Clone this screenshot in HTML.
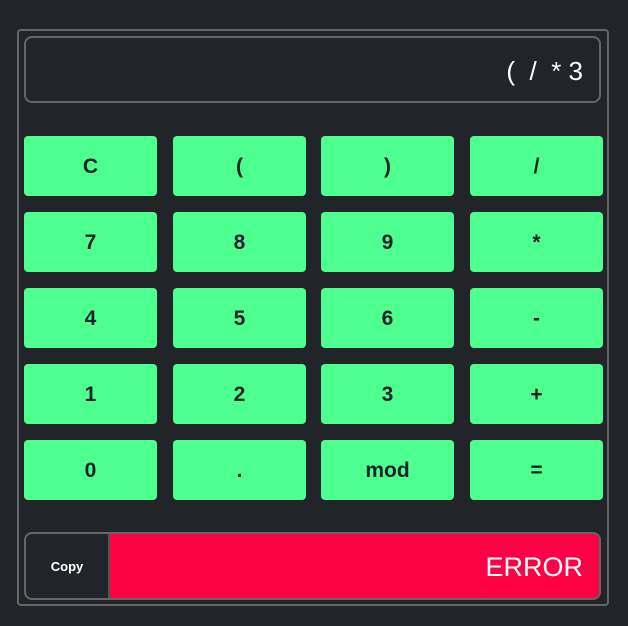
<!DOCTYPE html><html><head><style>
body{margin:0;width:628px;height:626px;background:#212429;font-family:"Liberation Sans",sans-serif;position:relative;overflow:hidden}
.o{position:absolute;left:17px;top:29px;width:588px;height:573px;border:2px solid #666;border-radius:4px}
.d{position:absolute;left:24px;top:36px;width:573px;height:63px;border:2px solid #666;border-radius:8px;color:#fff;font-size:26px;text-align:right;line-height:66px;box-sizing:content-box}
.d span{padding-right:16px}
.b{position:absolute;width:133px;height:60px;background:#4cff8f;border-radius:4px;color:#1e2229;font-weight:bold;font-size:21px;text-align:center;line-height:62px}
.bt{position:absolute;left:24px;top:532px;width:573px;height:64px;border:2px solid #666;border-radius:8px;overflow:hidden}
.cp{position:absolute;left:0;top:0;width:82px;height:64px;color:#fff;font-size:13px;font-weight:bold;text-align:center;line-height:66px;border-right:2px solid #555}
.er{position:absolute;left:84px;top:0;right:0;height:64px;background:#ff0044;color:#fff;font-size:27px;text-align:right;line-height:66px;padding-right:16px}
</style></head><body>
<div class="o"></div>
<div class="d"><span>(&nbsp; /&nbsp; * 3</span></div>
<div class="b" style="left:24px;top:136px">C</div><div class="b" style="left:173px;top:136px">(</div><div class="b" style="left:321px;top:136px">)</div><div class="b" style="left:470px;top:136px">/</div>
<div class="b" style="left:24px;top:212px">7</div><div class="b" style="left:173px;top:212px">8</div><div class="b" style="left:321px;top:212px">9</div><div class="b" style="left:470px;top:212px">*</div>
<div class="b" style="left:24px;top:288px">4</div><div class="b" style="left:173px;top:288px">5</div><div class="b" style="left:321px;top:288px">6</div><div class="b" style="left:470px;top:288px">-</div>
<div class="b" style="left:24px;top:364px">1</div><div class="b" style="left:173px;top:364px">2</div><div class="b" style="left:321px;top:364px">3</div><div class="b" style="left:470px;top:364px">+</div>
<div class="b" style="left:24px;top:440px">0</div><div class="b" style="left:173px;top:440px">.</div><div class="b" style="left:321px;top:440px">mod</div><div class="b" style="left:470px;top:440px">=</div>
<div class="bt"><div class="cp">Copy</div><div class="er">ERROR</div></div>
</body></html>
